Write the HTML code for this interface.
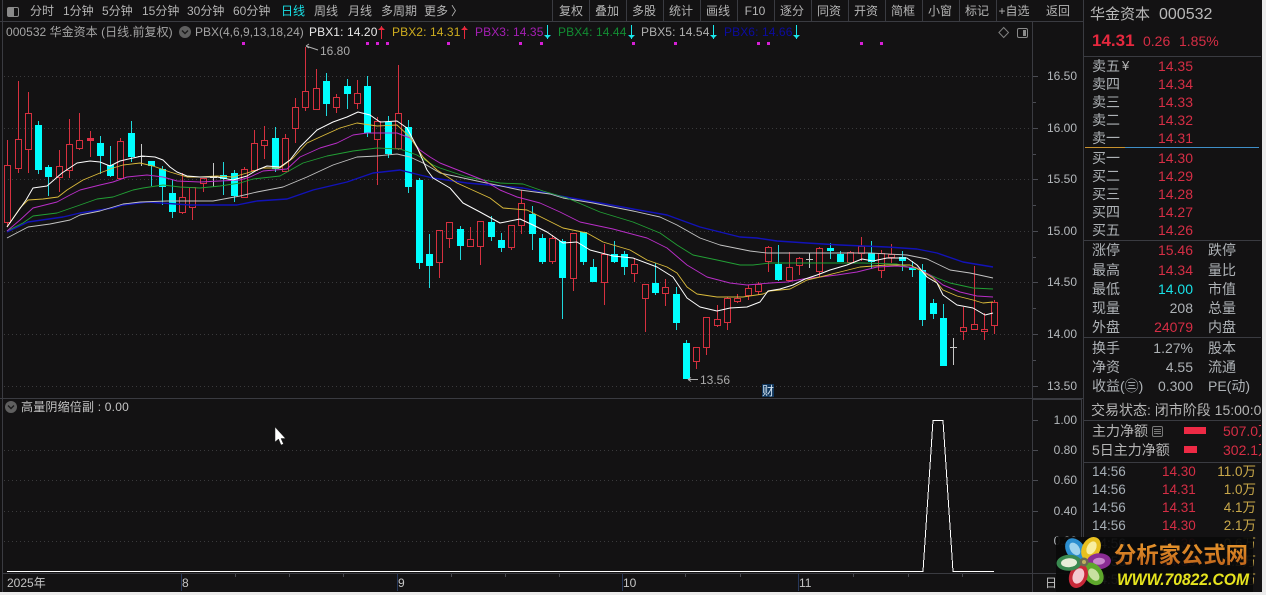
<!DOCTYPE html>
<html lang="zh"><head><meta charset="utf-8"><title>华金资本 000532</title>
<style>
html,body{margin:0;padding:0;background:#ececec}
#p{position:relative;width:1266px;height:595px;overflow:hidden;background:#ececec;font-family:"Liberation Sans","Noto Sans CJK SC",sans-serif}
#m{position:absolute;left:0;top:0;width:1262px;height:592px;background:#131213;overflow:hidden}
svg{position:absolute;left:0;top:0}
.t{position:absolute;white-space:nowrap;line-height:14px;height:14px;font-size:12px;color:#b4b4b4}
.c{transform:translateX(-50%)}
.a{font-size:12px;color:#b4b8bc;width:34px;text-align:right;left:1043px}
.l{left:1092px;font-size:14px;color:#aeb2b6}
.v{left:1140px;width:53px;text-align:right;font-size:14px;color:#d52e45}
.g{color:#aeb2b6}
.r{left:1208px;font-size:14px;color:#aeb2b6}
.tm{left:1092px;font-size:13.5px;color:#a6aeb6}
.pr{left:1162px;font-size:13.5px;color:#d52e45}
.vo{left:1200px;width:56px;text-align:right;font-size:13.5px;color:#c9a84a}
</style></head><body><div id="p"><div id="m">
<svg width="1262" height="592" viewBox="0 0 1262 592">
<g fill="none" stroke="#3a3b41" stroke-width="1" shape-rendering="crispEdges">
<path d="M0 21.5H1083M2.5 0V592M0 398.5H1083M3 573.5H1083M1032.5 21V592M1081.5 399V573M1083.5 0V592M1033 399.5H1082"/>
<path d="M552.5 0V21M589.5 0V21M626.5 0V21M663.5 0V21M700.5 0V21M737.5 0V21M774.5 0V21M811.5 0V21M848.5 0V21M885.5 0V21M922.5 0V21M959.5 0V21M996.5 0V21"/>
<path d="M1084 56.5H1261M1084 240.5H1261M1084 337.5H1261M1084 420.5H1261M1084 462.5H1261"/>
<path stroke="#4a4b52" d="M1033 76.5H1038M1033 128.5H1038M1033 179.5H1038M1033 231.5H1038M1033 282.5H1038M1033 334.5H1038M1033 386.5H1038M1033 102.5H1036M1033 154.5H1036M1033 205.5H1036M1033 257.5H1036M1033 308.5H1036M1033 360.5H1036M1033 420.5H1038M1033 450.5H1038M1033 480.5H1038M1033 511.5H1038M1033 541.5H1038"/>
<path stroke="#47484f" d="M235.5 574V577M289.5 574V577M343.5 574V577M451.5 574V577M505.5 574V577M559.5 574V577M685.5 574V577M740.5 574V577M853.5 574V577M908.5 574V577M962.5 574V577"/>
<path stroke="#26375a" d="M181.5 574V591M397.5 574V591M622.5 574V591M798.5 574V591"/>
</g>
<g fill="none" stroke="#3a3a3c" stroke-width="1" stroke-dasharray="1 3" shape-rendering="crispEdges">
<path d="M4 76.5H1032M4 128.5H1032M4 179.5H1032M4 231.5H1032M4 282.5H1032M4 334.5H1032M4 386.5H1032M4 450.5H1032M4 480.5H1032M4 511.5H1032M4 541.5H1032"/>
</g>
<!-- pink markers -->
<g fill="#d51fd5"><rect x="242" y="42" width="3" height="3"/><rect x="366" y="42" width="3" height="3"/><rect x="376" y="42" width="3" height="3"/><rect x="386" y="42" width="3" height="3"/><rect x="447" y="42" width="3" height="3"/><rect x="519" y="42" width="3" height="3"/><rect x="540" y="42" width="3" height="3"/><rect x="632" y="42" width="3" height="3"/><rect x="674" y="42" width="3" height="3"/><rect x="757" y="42" width="3" height="3"/><rect x="767" y="42" width="3" height="3"/><rect x="860" y="42" width="3" height="3"/><rect x="880" y="42" width="3" height="3"/></g>
<!-- red candles -->
<path fill="none" stroke="#d6303f" stroke-width="1" shape-rendering="crispEdges" d="
M7.5 140V165M4.5 165.5H10.5V222.5H4.5ZM7.5 223V227
M18.5 81V139M15.5 139.5H21.5V168.5H15.5ZM18.5 169V173
M28.5 92V113M25.5 113.5H31.5V149.5H25.5ZM28.5 150V173
M59.5 150V166M56.5 166.5H62.5V177.5H56.5ZM59.5 178V192
M69.5 119V144M66.5 144.5H72.5V170.5H66.5ZM69.5 171V178
M79.5 113V140M76.5 140.5H82.5V148.5H76.5ZM79.5 149V150
M90.5 131V157
M120.5 138V141M117.5 141.5H123.5V178.5H117.5Z
M182.5 173V197M179.5 197.5H185.5V212.5H179.5ZM182.5 213V214
M189.5 187.5H195.5V207.5H189.5ZM192.5 208V220
M200.5 178.5H206.5V183.5H200.5ZM203.5 184V192
M244.5 167V169M241.5 169.5H247.5V197.5H241.5Z
M254.5 130V143M251.5 143.5H257.5V170.5H251.5Z
M264.5 126V140M261.5 140.5H267.5V145.5H261.5ZM264.5 146V159
M285.5 134V138M282.5 138.5H288.5V171.5H282.5Z
M295.5 98V107M292.5 107.5H298.5V128.5H292.5ZM295.5 129V143
M305.5 47V91M302.5 91.5H308.5V107.5H302.5ZM305.5 108V111
M316.5 69V88M313.5 88.5H319.5V109.5H313.5Z
M336.5 94V97M333.5 97.5H339.5V107.5H333.5ZM336.5 108V113
M357.5 80V93M354.5 93.5H360.5V103.5H354.5ZM357.5 104V109
M377.5 117V121M374.5 121.5H380.5V139.5H374.5ZM377.5 140V185
M398.5 65V113M395.5 113.5H401.5V148.5H395.5ZM398.5 149V150
M436.5 230.5H442.5V262.5H436.5ZM439.5 263V278
M446.5 222.5H452.5V238.5H446.5ZM449.5 239V248
M470.5 227V239M467.5 239.5H473.5V246.5H467.5Z
M477.5 221.5H483.5V246.5H477.5ZM480.5 247V265
M508.5 225.5H514.5V247.5H508.5ZM511.5 248V250
M521.5 190V203M518.5 203.5H524.5V225.5H518.5ZM521.5 226V234
M552.5 235V238M549.5 238.5H555.5V261.5H549.5ZM552.5 262V264
M570.5 233.5H576.5V278.5H570.5ZM573.5 279V291
M604.5 244V254M601.5 254.5H607.5V282.5H601.5ZM604.5 283V305
M634.5 258V264M631.5 264.5H637.5V273.5H631.5ZM634.5 274V282
M642.5 284.5H648.5V298.5H642.5ZM645.5 299V332
M665.5 279V287M662.5 287.5H668.5V293.5H662.5ZM665.5 294V306
M693.5 347.5H699.5V361.5H693.5ZM696.5 362V369
M703.5 317.5H709.5V347.5H703.5ZM706.5 348V355
M717.5 305V319M714.5 319.5H720.5V325.5H714.5ZM717.5 326V327
M727.5 297V298M724.5 298.5H730.5V322.5H724.5ZM727.5 323V330
M737.5 294V298M734.5 298.5H740.5V301.5H734.5ZM737.5 302V303
M748.5 285V288M745.5 288.5H751.5V295.5H745.5ZM748.5 296V300
M758.5 282V284M755.5 284.5H761.5V291.5H755.5ZM758.5 292V295
M768.5 246V247M765.5 247.5H771.5V261.5H765.5ZM768.5 262V272
M789.5 252V267M786.5 267.5H792.5V280.5H786.5ZM789.5 281V282
M799.5 257V258M796.5 258.5H802.5V265.5H796.5ZM799.5 266V275
M819.5 247V248M816.5 248.5H822.5V271.5H816.5ZM819.5 272V277
M850.5 251V252M847.5 252.5H853.5V262.5H847.5Z
M861.5 237V246M858.5 246.5H864.5V253.5H858.5ZM861.5 254V261
M881.5 250V253M878.5 253.5H884.5V270.5H878.5ZM881.5 271V278
M891.5 244V254M888.5 254.5H894.5V257.5H888.5ZM891.5 258V263
M963.5 307V327M960.5 327.5H966.5V331.5H960.5ZM963.5 332V340
M974.5 266V324M971.5 324.5H977.5V329.5H971.5Z
M984.5 313V329M981.5 329.5H987.5V331.5H981.5ZM984.5 332V340
M994.5 300V302M991.5 302.5H997.5V325.5H991.5ZM994.5 326V334"/>
<rect x="87" y="138" width="7" height="3" fill="#e03048"/>
<!-- gray doji -->
<path fill="none" stroke="#c8c8c8" stroke-width="1" shape-rendering="crispEdges" d="M141.5 144V166M138 156.5H145M213.5 163V187M210 177.5H217M809.5 253V268M806 259.5H813M953.5 338V365M950 347.5H957"/>
<!-- cyan wicks -->
<path fill="none" stroke="#1fd8dc" stroke-width="1" shape-rendering="crispEdges" d="M38.5 121V174M48.5 165V196M100.5 136V174M110.5 146V177M131.5 121V162M151.5 161V186M162.5 166V205M172.5 180V218M223.5 162V195M234.5 170V202M275.5 127V172M326.5 73V116M347.5 79V109M367.5 76V137M388.5 116V158M408.5 120V193M419.5 178V269M429.5 234V288M460.5 226V260M491.5 216V241M501.5 233V252M532.5 206V250M542.5 234V264M562.5 239V319M583.5 232V265M593.5 259V281M614.5 241V263M624.5 251V275M655.5 263V295M676.5 287V330M686.5 340V378M778.5 245V281M830.5 243V259M840.5 251V262M871.5 241V269M902.5 251V271M912.5 261V277M922.5 264V326M933.5 299V319M943.5 304V365"/>
<!-- cyan bodies -->
<g fill="#00ffff" shape-rendering="crispEdges">
<rect x="35" y="125" width="7" height="45"/><rect x="45" y="167" width="7" height="10"/><rect x="97" y="143" width="7" height="13"/><rect x="107" y="165" width="7" height="11"/><rect x="128" y="133" width="7" height="24"/><rect x="148" y="161" width="7" height="5"/><rect x="159" y="169" width="7" height="18"/><rect x="169" y="193" width="7" height="19"/><rect x="220" y="175" width="7" height="4"/><rect x="231" y="173" width="7" height="23"/><rect x="272" y="138" width="7" height="31"/><rect x="323" y="81" width="7" height="23"/><rect x="344" y="86" width="7" height="8"/><rect x="364" y="86" width="7" height="47"/><rect x="385" y="122" width="7" height="32"/><rect x="405" y="127" width="7" height="60"/><rect x="416" y="180" width="7" height="83"/><rect x="426" y="254" width="7" height="12"/><rect x="457" y="229" width="7" height="17"/><rect x="488" y="222" width="7" height="15"/><rect x="498" y="240" width="7" height="8"/><rect x="529" y="214" width="7" height="20"/><rect x="539" y="238" width="7" height="24"/><rect x="559" y="241" width="7" height="37"/><rect x="580" y="232" width="7" height="30"/><rect x="590" y="267" width="7" height="15"/><rect x="611" y="254" width="7" height="8"/><rect x="621" y="254" width="7" height="13"/><rect x="652" y="283" width="7" height="10"/><rect x="673" y="294" width="7" height="29"/><rect x="683" y="343" width="7" height="36"/><rect x="775" y="264" width="7" height="16"/><rect x="827" y="248" width="7" height="3"/><rect x="837" y="254" width="7" height="8"/><rect x="868" y="253" width="7" height="9"/><rect x="899" y="257" width="7" height="4"/><rect x="909" y="267" width="7" height="3"/><rect x="919" y="270" width="7" height="50"/><rect x="930" y="303" width="7" height="11"/><rect x="940" y="318" width="7" height="48"/>
</g>
<!-- moving averages -->
<g fill="none" stroke-linejoin="round">
<polyline stroke="#1212b8" stroke-width="1.4" points="7,232 28,222 63,217 80,213 113,208 123,205 147,202 190,205 237,205 257,201 287,199 313,190 347,182 373,173 400,170 420,175 433,178 467,183 523,188 560,196 600,203 633,209 667,215 700,227 740,237 757,238 777,241 807,243 840,245 887,247 917,249 937,253 963,262 993,267"/>
<polyline stroke="#c4c4c4" stroke-width="0.9" points="7,238 28,227 50,224 70,220 80,215 100,211 123,204 140,202 167,201 213,201 240,196 257,192 283,187 307,177 333,165 357,157 377,156 397,154 410,157 423,163 440,173 477,181 520,190 550,194 563,198 593,203 633,211 660,217 677,225 700,238 720,245 740,249 750,251 767,253 797,253 830,253 870,253 907,255 927,259 950,270 970,273 993,278"/>
<polyline stroke="#22a035" stroke-width="0.9" points="7,231 23,223 33,216 57,213 80,205 97,199 113,197 133,190 143,188 163,185 180,187 200,188 220,186 240,183 253,179 280,176 303,163 327,156 353,151 377,148 400,149 417,155 433,165 440,168 467,177 500,183 523,184 543,191 567,198 600,212 633,222 660,233 677,245 693,255 717,260 740,265 753,265 770,263 797,263 830,263 863,263 897,264 917,269 937,278 950,283 973,288 993,289"/>
<polyline stroke="#b92ec8" stroke-width="0.95" points="7,231 20,220 33,208 57,202 70,195 80,190 100,185 113,182 127,177 147,175 163,177 177,181 200,182 220,181 240,180 250,177 263,171 287,169 300,157 320,148 337,143 353,135 367,133 397,133 410,138 420,150 430,157 440,163 483,180 500,190 517,197 540,203 560,212 580,222 613,229 647,238 667,248 687,265 707,277 730,283 747,285 770,283 787,282 803,279 820,277 837,275 857,272 877,267 897,266 917,268 930,275 943,285 960,292 977,296 993,297"/>
<polyline stroke="#dcbc3c" stroke-width="0.9" points="7,227 20,208 28,200 43,199 58,197 67,190 83,180 100,173 113,168 123,165 140,163 153,166 170,172 187,177 200,177 217,176 233,177 247,173 263,168 280,168 293,158 307,143 320,137 340,128 357,123 377,126 397,125 410,137 423,157 437,170 457,183 490,198 503,208 527,210 543,218 563,228 587,233 603,242 630,250 647,260 667,267 677,273 687,287 697,294 717,297 743,297 763,294 770,291 790,289 807,280 820,277 840,272 860,267 887,265 910,265 920,270 933,278 943,290 957,296 973,300 983,303 993,302"/>
<polyline stroke="#ffffff" stroke-width="1" points="7,227 26,200 33,188 47,186 62,173 77,163 90,161 100,162 110,166 120,161 133,158 142,156 155,157 163,160 170,167 177,172 187,176 200,177 217,177 233,180 247,176 257,170 267,166 280,167 290,160 300,147 317,130 333,122 347,117 358,112 370,115 380,122 397,121 407,128 417,147 427,170 433,178 450,188 463,203 480,212 500,223 520,219 533,225 547,232 563,243 577,242 590,250 613,256 633,258 657,267 673,277 687,298 700,307 717,311 730,308 747,307 760,302 768,291 780,289 793,285 805,279 817,275 830,270 847,265 862,259 873,261 887,258 907,258 917,265 927,277 937,283 943,295 957,305 973,308 985,315 993,313"/>
</g>
<!-- price leaders -->
<path fill="none" stroke="#b0b0b0" d="M306 46L318 50M306 46L309 44M306 46L309 48M688 379.5H698M688 379.5L691 377.5M688 379.5L691 381.5"/>
<!-- indicator line -->
<path fill="none" stroke="#fff" stroke-width="1" shape-rendering="crispEdges" d="M7 571.5H923L933 420.5H943L953 571.5H994"/>
<!-- legend arrows -->
<g fill="none" stroke-width="1" shape-rendering="crispEdges">
<path stroke="#e8283c" d="M381.5 26V39M378.5 29.5H384.5M379.5 28.5H383.5M380.5 27.5H382.5M464.5 26V39M461.5 29.5H467.5M462.5 28.5H466.5M463.5 27.5H465.5"/>
<path stroke="#19e8ec" d="M547.5 25V39M544.5 35.5H550.5M545.5 36.5H549.5M546.5 37.5H548.5M631.5 25V39M628.5 35.5H634.5M629.5 36.5H633.5M630.5 37.5H632.5M713.5 25V39M710.5 35.5H716.5M711.5 36.5H715.5M712.5 37.5H714.5M796.5 25V39M793.5 35.5H799.5M794.5 36.5H798.5M795.5 37.5H797.5"/>
</g>
<!-- toolbar icons -->
<rect x="7.5" y="7.5" width="11" height="9" rx="1.5" fill="none" stroke="#8a8a8a"/><rect x="8" y="8" width="6" height="8" fill="#8a8a8a"/>
<path d="M1003.7 27.5L1008.5 32.5L1003.7 37.5L998.9 32.5Z" fill="none" stroke="#808080"/>
<rect x="1017.5" y="28.5" width="10" height="9" rx="1.5" fill="none" stroke="#8a8a8a"/><rect x="1023" y="30" width="3" height="6" fill="#8a8a8a"/>
<!-- dropdown circles -->
<circle cx="185" cy="32" r="6" fill="#5f5f5f"/><path d="M182 30.5L185 33.5L188 30.5" fill="none" stroke="#1a1a1a" stroke-width="1.4"/>
<circle cx="11" cy="407" r="6" fill="#5f5f5f"/><path d="M8 405.5L11 408.5L14 405.5" fill="none" stroke="#1a1a1a" stroke-width="1.4"/>
<path d="M1085 147.5H1125" stroke="#c8912e" shape-rendering="crispEdges"/><path d="M1125 147.5H1259" stroke="#3f8fc8" shape-rendering="crispEdges"/>
<!-- mini bars & list icon -->
<rect x="1184" y="427" width="22" height="7" fill="#ee2a45"/><rect x="1184" y="446" width="13" height="7" fill="#ee2a45"/>
<rect x="1152.5" y="426.5" width="10" height="10" rx="1.5" fill="none" stroke="#7a7a7a"/><path d="M1154 429.5H1161M1154 431.5H1161M1154 433.5H1161" stroke="#7a7a7a" shape-rendering="crispEdges"/>
<!-- cursor -->
<path d="M275 427V442L278.5 439L281 445L283.5 444L281 438.5H285.5Z" fill="#fff" stroke="#222" stroke-width=".5"/>
<rect x="762" y="384" width="12" height="13" fill="#10365c"/>
</svg>

<!-- toolbar -->
<div class="t" style="left:30px;top:4px">分时</div><div class="t" style="left:63px;top:4px">1分钟</div><div class="t" style="left:102px;top:4px">5分钟</div><div class="t" style="left:142px;top:4px">15分钟</div><div class="t" style="left:187px;top:4px">30分钟</div><div class="t" style="left:233px;top:4px">60分钟</div><div class="t" style="left:281px;top:4px;color:#19e0e6">日线</div><div class="t" style="left:314px;top:4px">周线</div><div class="t" style="left:348px;top:4px">月线</div><div class="t" style="left:381px;top:4px">多周期</div><div class="t" style="left:424px;top:4px">更多</div><div class="t" style="left:451px;top:4px">〉</div>
<div class="t c" style="left:571px;top:4px">复权</div><div class="t c" style="left:607px;top:4px">叠加</div><div class="t c" style="left:644px;top:4px">多股</div><div class="t c" style="left:681px;top:4px">统计</div><div class="t c" style="left:718px;top:4px">画线</div><div class="t c" style="left:755px;top:4px">F10</div><div class="t c" style="left:792px;top:4px">逐分</div><div class="t c" style="left:829px;top:4px">同资</div><div class="t c" style="left:866px;top:4px">开资</div><div class="t c" style="left:903px;top:4px">简框</div><div class="t c" style="left:940px;top:4px">小窗</div><div class="t c" style="left:977px;top:4px">标记</div><div class="t c" style="left:1014px;top:4px">+自选</div><div class="t c" style="left:1058px;top:4px">返回</div>

<!-- legend -->
<div class="t" style="left:6px;top:25px;color:#a4a4a4;letter-spacing:.03px">000532 华金资本 (日线.前复权)</div>
<div class="t" style="left:195px;top:25px;color:#a4a4a4">PBX(4,6,9,13,18,24)</div>
<div class="t" style="left:309px;top:25px;color:#e8e8e8;letter-spacing:.1px">PBX1: 14.20</div>
<div class="t" style="left:392px;top:25px;color:#cdac1e;letter-spacing:.1px">PBX2: 14.31</div>
<div class="t" style="left:475px;top:25px;color:#a51fb4;letter-spacing:.1px">PBX3: 14.35</div>
<div class="t" style="left:558px;top:25px;color:#128c32;letter-spacing:.1px">PBX4: 14.44</div>
<div class="t" style="left:641px;top:25px;color:#b0b0b0;letter-spacing:.1px">PBX5: 14.54</div>
<div class="t" style="left:724px;top:25px;color:#0c0ca0;letter-spacing:.1px">PBX6: 14.66</div>

<div class="t" style="left:320px;top:44px;color:#aaa">16.80</div>
<div class="t" style="left:700px;top:373px;color:#aaa">13.56</div>
<div class="t" style="left:762px;top:384px;color:#cfe0ee">财</div>

<!-- axis -->
<div class="t a" style="top:69px">16.50</div><div class="t a" style="top:121px">16.00</div><div class="t a" style="top:172px">15.50</div><div class="t a" style="top:224px">15.00</div><div class="t a" style="top:275px">14.50</div><div class="t a" style="top:327px">14.00</div><div class="t a" style="top:379px">13.50</div>
<div class="t a" style="top:413px">1.00</div><div class="t a" style="top:443px">0.80</div><div class="t a" style="top:473px">0.60</div><div class="t a" style="top:504px">0.40</div><div class="t a" style="top:534px">0.20</div>

<!-- lower pane -->
<div class="t" style="left:21px;top:400px;color:#c4c4c4;letter-spacing:.2px">高量阴缩倍副 : 0.00</div>
<div class="t" style="left:7px;top:576px;color:#c4c4c4">2025年</div><div class="t" style="left:182px;top:576px;color:#c4c4c4">8</div><div class="t" style="left:398px;top:576px;color:#c4c4c4">9</div><div class="t" style="left:623px;top:576px;color:#c4c4c4">10</div><div class="t" style="left:799px;top:576px;color:#c4c4c4">11</div><div class="t" style="left:1045px;top:576px;color:#c4c4c4">日</div>

<!-- quote panel -->
<div class="t" style="left:1090px;top:8px;font-size:15px;color:#b8b8b8">华金资本</div>
<div class="t" style="left:1159px;top:8px;font-size:16px;color:#b8b8b8">000532</div>
<div class="t" style="left:1092px;top:34px;font-size:17px;font-weight:bold;color:#e5283e">14.31</div>
<div class="t" style="left:1143px;top:34px;font-size:14px;color:#d52e45">0.26</div>
<div class="t" style="left:1179px;top:34px;font-size:14px;color:#d52e45">1.85%</div>

<div class="t l" style="top:59px">卖五</div><div class="t" style="left:1122px;top:59px;font-size:13px">¥</div><div class="t v" style="top:59px">14.35</div>
<div class="t l" style="top:77px">卖四</div><div class="t v" style="top:77px">14.34</div>
<div class="t l" style="top:95px">卖三</div><div class="t v" style="top:95px">14.33</div>
<div class="t l" style="top:113px">卖二</div><div class="t v" style="top:113px">14.32</div>
<div class="t l" style="top:131px">卖一</div><div class="t v" style="top:131px">14.31</div>
<div class="t l" style="top:151px">买一</div><div class="t v" style="top:151px">14.30</div>
<div class="t l" style="top:169px">买二</div><div class="t v" style="top:169px">14.29</div>
<div class="t l" style="top:187px">买三</div><div class="t v" style="top:187px">14.28</div>
<div class="t l" style="top:205px">买四</div><div class="t v" style="top:205px">14.27</div>
<div class="t l" style="top:223px">买五</div><div class="t v" style="top:223px">14.26</div>

<div class="t l" style="top:243px">涨停</div><div class="t v" style="top:243px">15.46</div><div class="t r" style="top:243px">跌停</div>
<div class="t l" style="top:263px">最高</div><div class="t v" style="top:263px">14.34</div><div class="t r" style="top:263px">量比</div>
<div class="t l" style="top:282px">最低</div><div class="t v" style="top:282px;color:#19e0e6">14.00</div><div class="t r" style="top:282px">市值</div>
<div class="t l" style="top:301px">现量</div><div class="t v g" style="top:301px">208</div><div class="t r" style="top:301px">总量</div>
<div class="t l" style="top:320px">外盘</div><div class="t v" style="top:320px">24079</div><div class="t r" style="top:320px">内盘</div>
<div class="t l" style="top:341px">换手</div><div class="t v g" style="top:341px">1.27%</div><div class="t r" style="top:341px">股本</div>
<div class="t l" style="top:360px">净资</div><div class="t v g" style="top:360px">4.55</div><div class="t r" style="top:360px">流通</div>
<div class="t l" style="top:379px">收益(㊂)</div><div class="t v g" style="top:379px">0.300</div><div class="t r" style="top:379px">PE(动)</div>

<div style="position:absolute;left:1084px;top:399px;width:177px;height:193px;overflow:hidden">
<div class="t" style="left:7px;top:4px;font-size:14px;color:#b4b4b4">交易状态: 闭市阶段 15:00:05</div>
<div class="t" style="left:8px;top:25px;font-size:14px;color:#b4b4b4">主力净额</div>
<div class="t" style="left:139px;top:25px;font-size:14px;color:#d52e45">507.0万</div>
<div class="t" style="left:8px;top:44px;font-size:14px;color:#b4b4b4">5日主力净额</div>
<div class="t" style="left:139px;top:44px;font-size:14px;color:#d52e45">302.1万</div>
</div>

<div class="t tm" style="top:465px">14:56</div><div class="t pr" style="top:465px">14.30</div><div class="t vo" style="top:465px">11.0万</div>
<div class="t tm" style="top:483px">14:56</div><div class="t pr" style="top:483px">14.31</div><div class="t vo" style="top:483px">1.0万</div>
<div class="t tm" style="top:501px">14:56</div><div class="t pr" style="top:501px">14.31</div><div class="t vo" style="top:501px">4.1万</div>
<div class="t tm" style="top:519px">14:56</div><div class="t pr" style="top:519px">14.30</div><div class="t vo" style="top:519px">2.1万</div>
<div class="t tm" style="top:537px">14:56</div><div class="t pr" style="top:537px">14.30</div><div class="t vo" style="top:537px">0.6万</div>
<div class="t tm" style="top:555px">14:56</div><div class="t pr" style="top:555px">14.30</div><div class="t vo" style="top:555px">1.2万</div>
<div class="t tm" style="top:573px">14:56</div><div class="t pr" style="top:573px">14.31</div><div class="t vo" style="top:573px">0.5万</div>
</div>

<!-- watermark -->
<div style="position:absolute;left:1056px;top:537px;width:197px;height:55px;background:rgba(10,10,10,.93)"></div>
<svg width="1266" height="595" viewBox="0 0 1266 595">
<defs><linearGradient id="og" x1="0" y1="0" x2="0" y2="1"><stop offset="0" stop-color="#f0a030"/><stop offset="1" stop-color="#b85c18"/></linearGradient></defs>
<g transform="translate(1084 562)">
<g transform="rotate(-125)"><ellipse cx="15" cy="0" rx="12.5" ry="9" fill="#2c8fd0"/><ellipse cx="16" cy="0" rx="7" ry="4.5" fill="#9fd4ee"/></g>
<g transform="rotate(-62)"><ellipse cx="15" cy="0" rx="12.5" ry="9" fill="#e8c020"/><ellipse cx="16" cy="0" rx="7" ry="4.5" fill="#f8eea0"/></g>
<g transform="rotate(-3)"><ellipse cx="15" cy="0" rx="12" ry="8" fill="#8a2c94"/><ellipse cx="15" cy="0" rx="6" ry="3.5" fill="#c888cc"/></g>
<g transform="rotate(52)"><ellipse cx="15" cy="0" rx="12.5" ry="9" fill="#5ea82c"/><ellipse cx="16" cy="0" rx="7" ry="4.5" fill="#c8e0a0"/></g>
<g transform="rotate(112)"><ellipse cx="15" cy="0" rx="12.5" ry="9" fill="#c82838"/><ellipse cx="15" cy="0" rx="8" ry="5.5" fill="#f4c8d0"/></g>
<g transform="rotate(177)"><ellipse cx="15" cy="0" rx="12.5" ry="8" fill="#3a8a50"/><ellipse cx="15" cy="0" rx="8" ry="4.5" fill="#e8eed8"/></g>
<circle r="4.5" fill="#6a6a50"/><circle r="2" fill="#c0b060"/>
</g>
<text x="1114" y="563" font-family="'Noto Sans CJK SC',sans-serif" font-size="22.5" font-weight="700" fill="url(#og)" textLength="134" lengthAdjust="spacingAndGlyphs">分析家公式网</text>
<text x="1117" y="585" font-family="'Liberation Sans',sans-serif" font-size="16.5" font-weight="700" font-style="italic" fill="#e6e41e" textLength="132" lengthAdjust="spacingAndGlyphs">WWW.70822.COM</text>
</svg>
</div></body></html>
